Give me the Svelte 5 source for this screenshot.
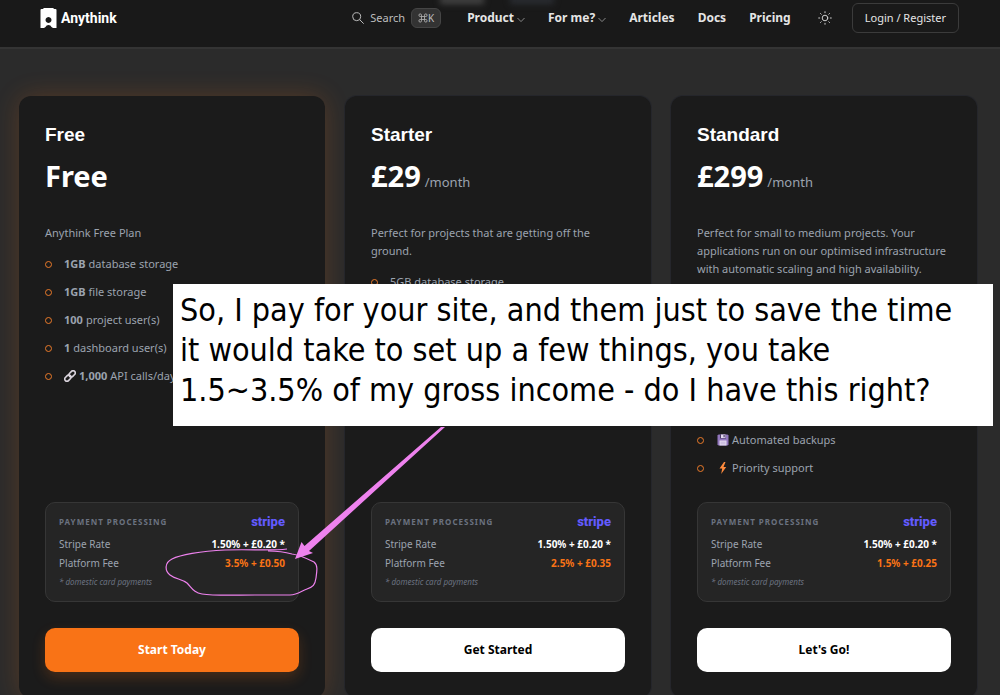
<script>
  const plans = [
    {
      name: 'Free',
      price: 'Free',
      period: '',
      description: 'Anythink Free Plan',
      features: [
        { strong: '1GB', text: 'database storage' },
        { strong: '1GB', text: 'file storage' },
        { strong: '100', text: 'project user(s)' },
        { strong: '1', text: 'dashboard user(s)' },
        { icon: 'link', strong: '1,000', text: 'API calls/day' }
      ],
      fee: '3.5% + £0.50',
      action: 'Start Today',
      featured: true
    },
    {
      name: 'Starter',
      price: '£29',
      period: '/month',
      description: 'Perfect for projects that are getting off the ground.',
      features: [{ text: '5GB database storage' }],
      fee: '2.5% + £0.35',
      action: 'Get Started'
    },
    {
      name: 'Standard',
      price: '£299',
      period: '/month',
      description:
        'Perfect for small to medium projects. Your applications run on our optimised infrastructure with automatic scaling and high availability.',
      features: [
        { icon: 'disk', text: 'Automated backups' },
        { icon: 'bolt', text: 'Priority support' }
      ],
      alignEnd: true,
      fee: '1.5% + £0.25',
      action: "Let's Go!"
    }
  ];
</script>

{#snippet chevron()}
  <svg class="chevron" viewBox="0 0 8 6" aria-hidden="true"><path d="M0.5 1 4 4.600 7.500 1" fill="none" stroke="currentColor" /></svg>
{/snippet}

<div class="page">
  <header>
    <span class="haze" aria-hidden="true"></span>
    <a class="brand" href="#home">
      <svg viewBox="0 0 17 20" aria-hidden="true">
        <path fill="#fff" fill-rule="evenodd" d="M4 0h9l1.200 1H15.500a1 1 0 0 1 1 1v18H13L11.500 19a3.200 3.200 0 0 0-6 0L4 20H0.500V2a1 1 0 0 1 1-1h1.300zM8.500 9a3 3 0 1 0 0.010 0z" />
      </svg>
      Anythink
    </a>
    <nav>
      <button class="search">
        <svg viewBox="0 0 12 12" aria-hidden="true"><circle cx="4.700" cy="4.700" r="4" /><path d="m7.700 7.700 4 4" /></svg>
        Search
        <kbd>
          <svg viewBox="0 0 10 10" aria-hidden="true"><path d="M3.500 3.500h3v3h-3zM3.500 3.500H2.200A1.300 1.300 0 1 1 3.500 2.200zM6.500 3.500V2.200A1.300 1.300 0 1 1 7.800 3.500zM3.500 6.500v1.300A1.300 1.300 0 1 1 2.200 6.500zM6.500 6.500h1.300A1.300 1.300 0 1 1 6.500 7.800z" /></svg>K
        </kbd>
      </button>
      <a href="#product">Product{@render chevron()}</a>
      <a href="#for-me">For me?{@render chevron()}</a>
      <a href="#articles">Articles</a>
      <a href="#docs">Docs</a>
      <a href="#pricing">Pricing</a>
      <button class="theme" aria-label="Theme">
        <svg viewBox="0 0 14 14" aria-hidden="true">
          <circle cx="7" cy="7" r="2.800" />
          <path d="M7 .7v1M7 12.300v1M.7 7h1M12.300 7h1M2.500 2.500l.7.7M10.800 10.800l.7.7M2.500 11.500l.7-.7M10.800 3.200l.7-.7" />
        </svg>
      </button>
      <a class="login" href="#login">Login / Register</a>
    </nav>
  </header>

  <main>
    {#each plans as plan}
      <article class:featured={plan.featured}>
        <h2>{plan.name}</h2>
        <p class="price"><strong>{plan.price}</strong>{#if plan.period}<span>{plan.period}</span>{/if}</p>
        <p class="description">{plan.description}</p>
        <ul class:end={plan.alignEnd}>
          {#each plan.features as item}
            <li>
              {#if item.icon === 'link'}
                <svg class="emoji" viewBox="0 0 12 12" aria-hidden="true">
                  <g fill="none" stroke="#d9d3dc" stroke-width="1.600" transform="rotate(-45 6 6)">
                    <rect x="-0.500" y="3.800" width="7" height="4.400" rx="2.200" />
                    <rect x="5.500" y="3.800" width="7" height="4.400" rx="2.200" />
                  </g>
                </svg>
              {:else if item.icon === 'disk'}
                <svg class="emoji" viewBox="0 0 12 12" aria-hidden="true">
                  <path fill="#9277bd" d="M1.500.5h9l1 1v9l-1 1h-9l-1-1v-9z" />
                  <path fill="#4b3b66" d="M3 .5h6v4H3z" />
                  <path fill="#e3d9ef" d="M4 .5h4.500v3.500H4zM2.500 6.500h7v5h-7z" />
                  <path fill="#4b3b66" d="M6.500 1h1.200v2.300H6.500z" />
                  <path stroke="#b9a7d3" stroke-width=".7" d="M3.500 8.200h5M3.500 9.800h5" />
                </svg>
              {:else if item.icon === 'bolt'}
                <svg class="emoji" viewBox="0 0 12 12" aria-hidden="true">
                  <path fill="#ff8b3d" d="M7 0 2.500 6.500h2.700L4.200 12l5-7H6.500L8.500 0z" />
                </svg>
              {/if}
              {#if item.strong}<strong>{item.strong}</strong>{/if}
              {item.text}
            </li>
          {/each}
        </ul>
        <section class="fees">
          <div class="fees-head"><h3>PAYMENT PROCESSING</h3><span class="stripe">stripe</span></div>
          <dl>
            <div><dt>Stripe Rate</dt><dd>1.50% + £0.20 *</dd></div>
            <div><dt>Platform Fee</dt><dd class="fee">{plan.fee}</dd></div>
          </dl>
          <small>* domestic card payments</small>
        </section>
        <button class="cta">{plan.action}</button>
      </article>
    {/each}
  </main>

  <svg class="marks" width="340" height="200" viewBox="150 410 340 200" aria-hidden="true">
    <path class="loop" d="M287 549C270 551 250 549 225 550C200 551 180 555 172 559C164 563 165 571 170 575C175 579 182 579 187 583C192 588 194 593 202 594C215 596 235 595 255 595L290 595C298 595 301 591 307 589C313 587 315 585 316 578C317 571 318 565 314 562C308 559 300 555 292 554C285 552 277 551 268 551" />
    <path class="arrow" d="M295 559 301.500 542 304.500 546 441 427H445L309 551 313 553z" />
  </svg>
  <p class="note">
    So, I pay for your site, and them just to save the time<br />
    it would take to set up a few things, you take<br />
    1.5~3.5% of my gross income - do I have this right?
  </p>
</div>

<style>
  :global(body) { margin: 0; background: #2b2b2b; }
  .page {
    position: relative;
    height: 100vh;
    overflow: hidden;
    background: #2b2b2b;
    color: #9ca3af;
    font: 11px/18px "Noto Sans", "Open Sans", sans-serif;
  }
  h2, h3, p, ul, dl, dd { margin: 0; padding: 0; }
  button { border: 0; background: none; font: inherit; color: inherit; padding: 0; }
  a { color: inherit; text-decoration: none; }

  header {
    position: relative;
    display: flex;
    align-items: center;
    justify-content: space-between;
    padding: 3px 41px 14px 40px;
    border-bottom: 2px solid #343434;
    background: #191919;
    overflow: hidden;
  }
  .haze {
    position: absolute;
    left: 44%;
    top: -4px;
    width: 44px;
    height: 8px;
    background: #444;
    box-shadow: 70px 0 #2a2d32;
    filter: blur(3px);
  }
  .brand {
    display: flex;
    align-items: center;
    gap: 4px;
    color: #fff;
    font: bold 14px/20px Roboto, Arial, sans-serif;
  }
  .brand svg { width: 17px; height: 20px; }
  nav { display: flex; align-items: center; color: #e5e5e5; font-size: 12px; font-weight: 700; }
  nav > a { display: flex; align-items: center; gap: 3px; margin-left: 23px; }
  nav > .search + a { margin-left: 26px; }
  .chevron { width: 8px; height: 6px; margin-top: 3px; color: #888; }
  .search { position: relative; display: flex; align-items: center; gap: 6px; font-size: 11px; font-weight: 400; color: #bdbdbd; }
  .search > svg { width: 12px; height: 12px; fill: none; stroke: #bbb; }
  kbd {
    display: flex;
    align-items: center;
    justify-content: center;
    box-sizing: border-box;
    width: 30px;
    height: 20px;
    border: 1px solid #454545;
    border-radius: 6px;
    background: #333;
    font: 10px/18px "Noto Sans", sans-serif;
  }
  kbd svg { width: 10px; height: 10px; fill: none; stroke: #bbb; stroke-width: .8; }
  .theme { display: flex; margin-left: 27px; }
  .theme svg { width: 14px; height: 14px; fill: none; stroke: #ccc; stroke-linecap: round; }
  nav > .login {
    margin-left: 20px;
    padding: 5px 12px;
    border: 1px solid #3b3b3b;
    border-radius: 6px;
    font-size: 11px;
    font-weight: 400;
  }

  main {
    display: grid;
    grid-template-columns: repeat(3, minmax(0, 1fr));
    gap: 20px;
    min-height: calc(100vh - 93px);
    padding: 47px 23px 0 19px;
  }
  article {
    display: flex;
    flex-direction: column;
    padding: 26px;
    border-radius: 12px;
    background: #1b1b1b;
    box-shadow: 0 0 0 1px #25262b;
  }
  .featured { box-shadow: 0 0 26px rgba(249, 115, 22, .2); }
  h2 { color: #fff; font: bold 19px/26px "Liberation Sans", Arial, sans-serif; }
  .price { display: flex; align-items: baseline; gap: 4px; height: 40px; margin-top: 8px; line-height: 40px; font-size: 13px; }
  .price strong { color: #fff; font-size: 29px; }
  .description { margin-top: 28px; }
  ul { display: flex; flex: 1; flex-direction: column; gap: 10px; margin: 13px 0 25px; list-style: none; }
  .end { justify-content: flex-end; }
  li { display: flex; align-items: center; gap: 3px; }
  li::before {
    content: "";
    box-sizing: border-box;
    width: 7px;
    height: 7px;
    margin-right: 9px;
    border: 1px solid #ea7a2a;
    border-radius: 50%;
  }
  .end li::before { margin-right: 10px; }
  .emoji { width: 12px; height: 12px; }
  .fees { padding: 10px 13px; border: 1px solid #363636; border-radius: 10px; background: #252525; }
  .fees-head, dl div { display: flex; align-items: center; justify-content: space-between; }
  h3 { color: #6b7280; font-size: 8px; letter-spacing: 1px; }
  .stripe { color: #635bff; font-family: Roboto, sans-serif; font-size: 13px; font-weight: 800; }
  dl { margin-top: 4px; font-size: 10px; line-height: 19px; }
  dd { color: #fff; font-weight: 700; }
  .fee { color: #f97316; }
  small { display: block; color: #6b7280; font-size: 8px; font-style: italic; line-height: 18px; }
  .cta { margin-top: 26px; padding: 13px; border-radius: 10px; background: #fff; color: #000; font-size: 12px; font-weight: 700; }
  .featured .cta { background: #f97316; color: #fff; box-shadow: 0 6px 14px rgba(249, 115, 22, .2); }

  .note {
    position: absolute;
    left: 173px;
    right: 7px;
    top: 284px;
    padding: 6px 7px 16px;
    background: #fff;
    color: #000;
    font: 32px/40px "DejaVu Sans Condensed", Tahoma, sans-serif;
    white-space: nowrap;
  }
  .marks { position: absolute; left: 150px; top: 410px; }
  .loop { fill: none; stroke: #ee82ee; stroke-width: 1.2; }
  .arrow { fill: #ee82ee; }
</style>
